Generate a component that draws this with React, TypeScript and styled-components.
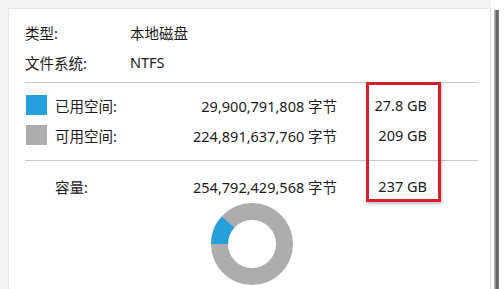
import React from "react";
import styled, {createGlobalStyle} from "styled-components";

const GlobalStyle = createGlobalStyle`
    html, body {
        margin: 0;
        padding: 0;
        background: #ffffff;
    }

    body {
        font-family: "Noto Sans", "Noto Sans CJK SC", sans-serif;
        color: #1b1b1b;
    }
`;

const USED = 29900791808;
const TOTAL = 254792429568;

const Page = styled.div`
    display: flex;
    width: 504px;
    height: 289px;
    overflow: hidden;
`;

const Backdrop = styled.div`
    width: 483px;
    padding: 8px 0 0 8px;
    background: #f4f4f4;
    display: flex;
`;

const FrameEdge = styled.div`
    width: 5px;
    margin: 10px 0 0 3px;
    background: linear-gradient(to right, #c8c8c8, #555555 60%, #8a8a8a);
`;

const Panel = styled.div`
    position: relative;
    flex: 1;
    background: #ffffff;
    border-left: 1px solid #e6e6e6;
    border-top: 1px solid #e6e6e6;
    border-right: 1px solid #dcdcdc;
    padding: 8px 12px 0 16px;
    display: flex;
    flex-direction: column;
`;

const InfoRow = styled.div`
    display: grid;
    grid-template-columns: 105px auto;
    align-items: center;
    height: 30px;
    font-size: 14.5px;
`;

const Divider = styled.div<{ $top: number; $bottom: number }>`
    height: 1px;
    background: #c9c9c9;
    margin: ${p => p.$top}px 0 ${p => p.$bottom}px;
`;

const SpaceRow = styled.div`
    display: grid;
    grid-template-columns: 30px 100px 182px 90px;
    align-items: center;
    height: 30px;
    font-size: 14.5px;
`;

const Swatch = styled.span<{ $color: string }>`
    display: block;
    width: 21px;
    height: 20px;
    margin-left: 1px;
    background: ${p => p.$color};
`;

const Num = styled.span`
    text-align: right;
    white-space: nowrap;
`;

const ChartWrap = styled.div`
    display: flex;
    justify-content: center;
    margin-top: 2px;
`;

const Highlight = styled.div`
    position: absolute;
    left: 357px;
    top: 73px;
    width: 69px;
    height: 114px;
    border: 3px solid #d4202b;
    box-shadow: 1px 2px 3px rgba(0, 0, 0, 0.25);
    pointer-events: none;
`;

const Donut: React.FC<{ fraction: number }> = ({fraction}) => {
    const r = 32.5;
    const c = 2 * Math.PI * r;
    return (
        <svg width="82" height="82" viewBox="0 0 82 82">
            <circle cx="41" cy="41" r={r} fill="none" stroke="#adadad" strokeWidth="17"/>
            <circle
                cx="41" cy="41" r={r} fill="none" stroke="#26a0da" strokeWidth="17"
                strokeDasharray={`${c * fraction} ${c}`}
                transform="rotate(180 41 41)"
            />
        </svg>
    );
};

export default function App() {
    return (
        <Page>
            <GlobalStyle/>
            <Backdrop>
                <Panel>
                    <InfoRow>
                        <span>类型:</span>
                        <span>本地磁盘</span>
                    </InfoRow>
                    <InfoRow>
                        <span>文件系统:</span>
                        <span>NTFS</span>
                    </InfoRow>
                    <Divider $top={5} $bottom={7}/>
                    <SpaceRow>
                        <Swatch $color="#26a0da"/>
                        <span>已用空间:</span>
                        <Num>29,900,791,808 字节</Num>
                        <Num>27.8 GB</Num>
                    </SpaceRow>
                    <SpaceRow>
                        <Swatch $color="#adadad"/>
                        <span>可用空间:</span>
                        <Num>224,891,637,760 字节</Num>
                        <Num>209 GB</Num>
                    </SpaceRow>
                    <Divider $top={10} $bottom={10}/>
                    <SpaceRow>
                        <span/>
                        <span>容量:</span>
                        <Num>254,792,429,568 字节</Num>
                        <Num>237 GB</Num>
                    </SpaceRow>
                    <ChartWrap>
                        <Donut fraction={USED / TOTAL}/>
                    </ChartWrap>
                    <Highlight/>
                </Panel>
            </Backdrop>
            <FrameEdge/>
        </Page>
    );
}
